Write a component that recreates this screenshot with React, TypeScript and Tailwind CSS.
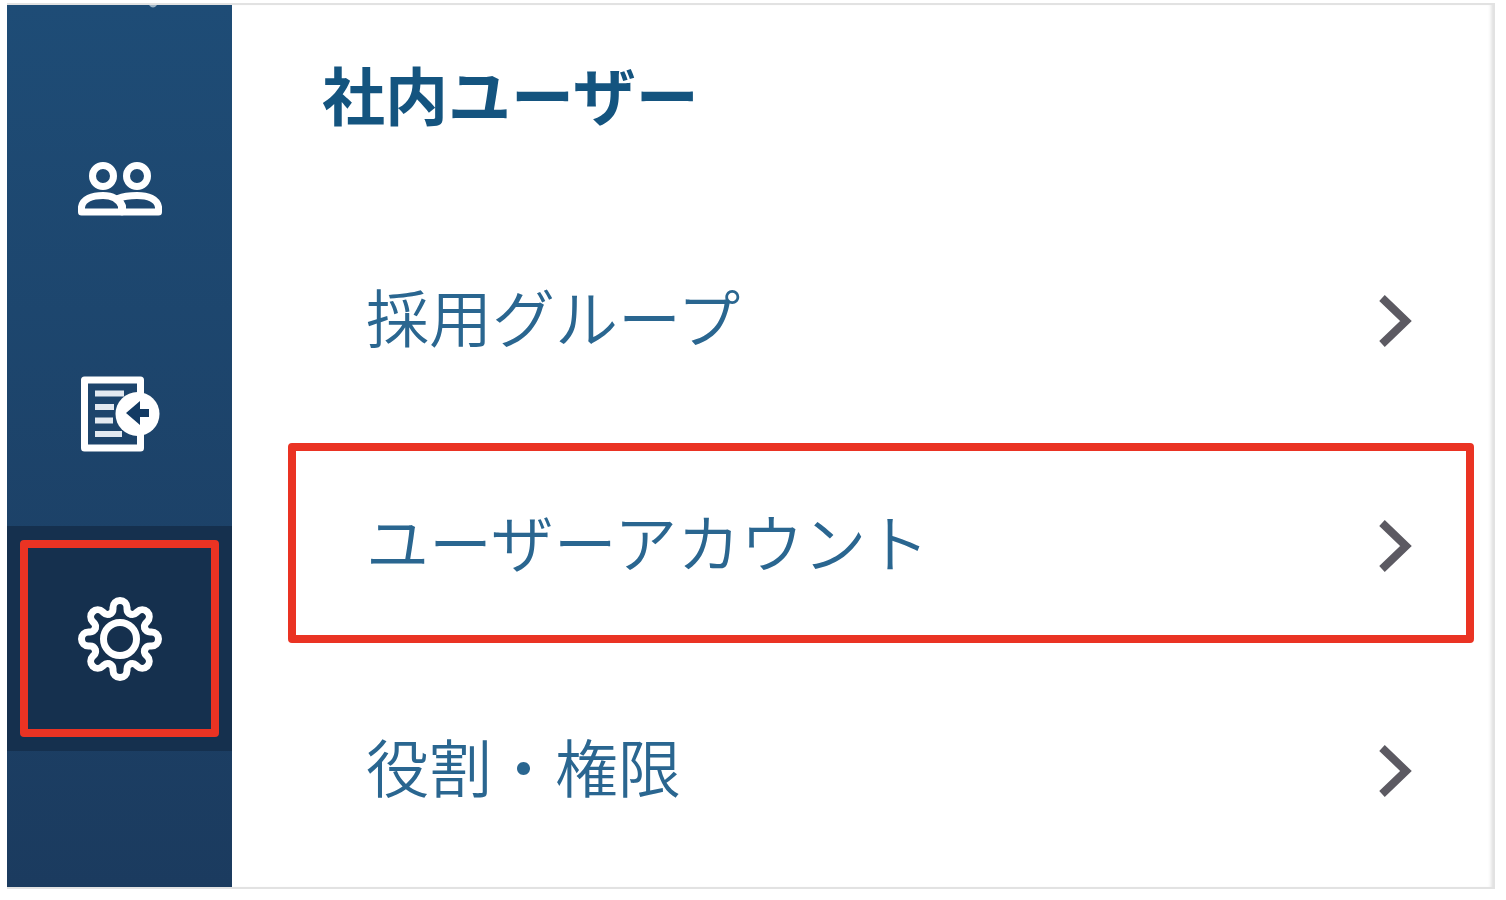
import { clsx } from "clsx";
import type { ReactNode } from "react";

type NavItem = {
  id: string;
  label: string;
  icon: ReactNode;
  active?: boolean;
};

type MenuItem = {
  id: string;
  label: string;
  highlighted?: boolean;
};

const GEAR_ANGLES = [0, 45, 90, 135, 180, 225, 270, 315];

function PeopleIcon() {
  return (
    <svg
      width="86"
      height="56"
      viewBox="0 0 86 56"
      fill="none"
      stroke="white"
      strokeWidth="7"
      strokeLinejoin="round"
      aria-hidden="true"
    >
      <circle cx="26" cy="15" r="10.5" />
      <circle cx="60" cy="15" r="10.5" />
      <path d="M4.500 51V46C6 38 15 34.500 26 34.500S42 39 44.500 45V51Z" />
      <path d="M45.500 51V45C44 42 42 39 41 37.500C46 35.500 52 34.500 60 34.500C71 34.500 80 38 81.500 46V51Z" />
    </svg>
  );
}

function DocumentIcon() {
  return (
    <svg width="80" height="78" viewBox="0 0 80 78" fill="none" aria-hidden="true">
      <path d="M60.500 22V5H4.500V73H60.500V56" stroke="white" strokeWidth="7" strokeLinejoin="round" />
      <path d="M15 18.500H44M15 32H34M15 45.500H33M15 59H42" stroke="#e3e9f0" strokeWidth="6" />
      <circle cx="57.500" cy="39" r="22" fill="white" />
      <path d="M46 38L60 26V34H69V42H60V50Z" fill="#123a63" />
    </svg>
  );
}

function GearIcon() {
  return (
    <svg
      width="84"
      height="84"
      viewBox="-42 -42 84 84"
      fill="none"
      stroke="white"
      strokeWidth="7"
      strokeLinecap="round"
      aria-hidden="true"
    >
      <circle r="16.500" />
      {GEAR_ANGLES.map((angle) => (
        <path
          key={angle}
          transform={`rotate(${angle})`}
          d="M-10.300 -24.900Q-7 -26.300 -7 -30V-31.500A7 7 0 0 1 7 -31.500V-30Q7 -26.300 10.300 -24.900"
        />
      ))}
    </svg>
  );
}

function ChevronIcon() {
  return (
    <svg
      width="34"
      height="54"
      viewBox="0 0 34 54"
      fill="none"
      stroke="#5c5a62"
      strokeWidth="8"
      className="shrink-0"
      aria-hidden="true"
    >
      <path d="M4 4L28 27L4 50" />
    </svg>
  );
}

const NAV_ITEMS: NavItem[] = [
  { id: "people", label: "候補者", icon: <PeopleIcon /> },
  { id: "documents", label: "書類", icon: <DocumentIcon /> },
  { id: "settings", label: "設定", icon: <GearIcon />, active: true },
];

const MENU_ITEMS: MenuItem[] = [
  { id: "groups", label: "採用グループ" },
  { id: "accounts", label: "ユーザーアカウント", highlighted: true },
  { id: "roles", label: "役割・権限" },
];

function Sidebar() {
  return (
    <nav className="w-[225px] shrink-0 bg-linear-to-b from-[#1e4c76] to-[#1b3b5f]">
      {/* lower edge of the item scrolled out above */}
      <div className="h-[71px] pl-[142px]">
        <svg width="8" height="3" viewBox="0 0 8 3" aria-hidden="true">
          <path d="M0 0H8Q4 5 0 0Z" fill="#9db4c6" />
        </svg>
      </div>
      {NAV_ITEMS.map((item) => (
        <a
          key={item.id}
          href={`#${item.id}`}
          aria-label={item.label}
          aria-current={item.active ? "page" : undefined}
          className={clsx(
            "flex h-[225px] items-center justify-center",
            item.active && "bg-[#15304e]"
          )}
        >
          <span
            className={clsx(
              "flex h-[197px] w-[199px] items-center justify-center rounded-sm border-8",
              item.active ? "border-[#ea3323]" : "border-transparent"
            )}
          >
            {item.icon}
          </span>
        </a>
      ))}
    </nav>
  );
}

export default function App() {
  return (
    <div className="bg-white pt-[3px] pr-[11px] pb-[11px] pl-[7px] font-['Noto_Sans_CJK_JP',sans-serif]">
      <div className="flex border-2 border-l-0 border-[#e2e2e2]">
        <Sidebar />
        <main className="min-w-0 flex-1 pt-[52px] pb-[7px] shadow-[inset_-4px_0_4px_-3px_#d4d4d4]">
          <h1 className="mb-[76px] pl-[90px] text-[63px] leading-[72px] font-bold text-[#14547f]">
            社内ユーザー
          </h1>
          <ul className="pr-[19px] pl-14">
            {MENU_ITEMS.map((item) => (
              <li key={item.id} className="flex h-[225px] items-center">
                <a
                  href={`#${item.id}`}
                  className={clsx(
                    "flex h-[200px] flex-1 items-center justify-between rounded-sm border-8 pt-[6px] pr-[54px] pl-[70px]",
                    item.highlighted ? "border-[#ea3323]" : "border-transparent"
                  )}
                >
                  <span className="pb-3 text-[63px] leading-[72px] font-[350] text-[#2a6690]">
                    {item.label}
                  </span>
                  <ChevronIcon />
                </a>
              </li>
            ))}
          </ul>
        </main>
      </div>
    </div>
  );
}
